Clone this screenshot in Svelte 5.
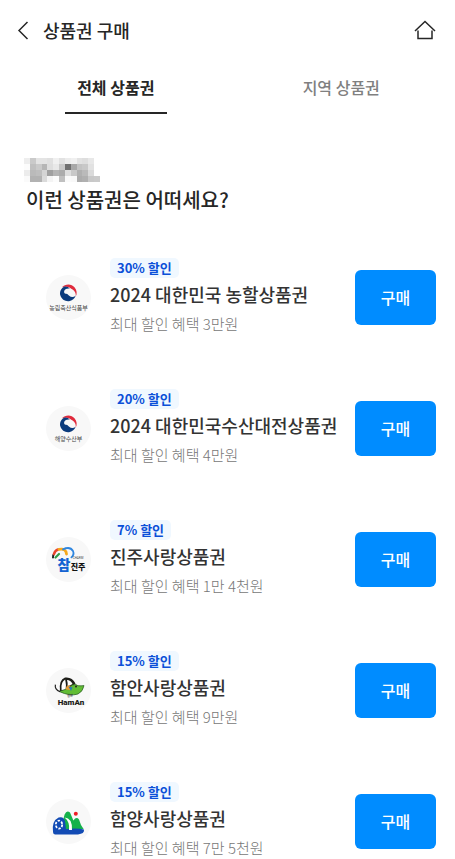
<script lang="ts">
  type Voucher = {
    logo: string;
    rate: number;
    name: string;
    benefit: string;
  };

  const tabs = ["전체 상품권", "지역 상품권"];
  let active = $state(0);

  const vouchers: Voucher[] = [
    { logo: "mafra", rate: 30, name: "2024 대한민국 농할상품권", benefit: "3만원" },
    { logo: "mof", rate: 20, name: "2024 대한민국수산대전상품권", benefit: "4만원" },
    { logo: "jinju", rate: 7, name: "진주사랑상품권", benefit: "1만 4천원" },
    { logo: "haman", rate: 15, name: "함안사랑상품권", benefit: "9만원" },
    { logo: "hamyang", rate: 15, name: "함양사랑상품권", benefit: "7만 5천원" },
  ];

  // grey levels of the masked user name, one row per line of blocks
  const mask = [
    [238, 202, 228, 228, 224, 240, 226, 236, 240, 226, 222, 232, 255],
    [252, 192, 202, 182, 222, 232, 200, 112, 168, 195, 200, 226, 255],
    [236, 186, 190, 212, 160, 180, 172, 222, 200, 176, 186, 218, 255],
    [250, 178, 178, 218, 244, 252, 192, 250, 248, 172, 176, 200, 202],
  ];
</script>

{#snippet taegeuk()}
  <path
    d="M16 12.2C19.5 8.5 25.5 8.6 28.7 12.4C31 15.2 31.2 18.8 29.8 21.6C30 18 28.8 16 26.6 14.6C24.2 13 22.8 10.8 16 12.2Z"
    fill="#e02b3c"
  />
  <path
    d="M17.6 11.9C14.6 13.8 13.4 17.4 14.4 20.6C15.6 24.4 19.2 26.7 23 26.2C26.2 25.8 28.8 23.6 29.6 20.8C27.6 22.4 25 22.4 23.2 20.8C21.6 19.4 21.4 18.6 19.8 18.8C18.4 18.8 17.6 17.2 18.4 15.6C19.2 13.8 21.6 13 23.8 13.6C22.4 11.8 19.6 11 17.6 11.9Z"
    fill="#0b3b7c"
  />
{/snippet}

{#snippet logo(name: string)}
  <svg class="logo" viewBox="0 0 45 45" aria-hidden="true">
    <circle cx="22.5" cy="22.5" r="22.5" fill="#f8f8f8" />
    {#if name === "mafra"}
      {@render taegeuk()}
      <text x="22.5" y="35" font-size="6" fill="#444">농림축산식품부</text>
    {:else if name === "mof"}
      {@render taegeuk()}
      <text x="22.5" y="35" font-size="6" fill="#444">해양수산부</text>
    {:else if name === "jinju"}
      <g fill="none" stroke-linecap="round">
        <path d="M7 20.5Q6.6 18.5 8 17" stroke="#222" stroke-width="2" />
        <path d="M8 17Q9 13.5 12 12.6" stroke="#e8452c" stroke-width="2.6" />
        <path d="M9.5 20.5L13 17" stroke="#2e9e48" stroke-width="2.2" />
        <path d="M13 12.4Q20 11 20.5 17" stroke="#f6a81c" stroke-width="2.8" />
        <path d="M17 12.4Q24 9 27 14Q28.6 17.6 25.4 20.4" stroke="#2f86e0" stroke-width="1.8" />
      </g>
      <text x="18" y="33" font-size="14" font-weight="900" fill="#1463d2">참</text>
      <text class="latin" x="32" y="22" font-size="3" fill="#444">CHARM</text>
      <text x="32" y="33" font-size="8" font-weight="900" fill="#111">진주</text>
    {:else if name === "haman"}
      <path d="M14 23Q12.6 12 19 9.6Q26 8.6 29.5 15.5L22 24Z" fill="#1d1d18" />
      <path d="M15.6 22Q14.4 14 19.2 11.4Q20.4 16 19.6 22.4Z" fill="#fff" />
      <path d="M21 12Q24.6 12 26.6 16L21.6 18.4Q22 15 21 12Z" fill="#fff" />
      <path d="M13 23.4Q18 22 23 20Q26 15.6 30 16.6Q31.4 18.4 38 17.6Q37 23.6 32 26Q24 28.6 13 23.4Z" fill="#62bd35" stroke="#245520" stroke-width="0.7" />
      <path d="M19.6 21.6Q20 16.6 24.4 17.4L24 22Z" fill="#e69a34" />
      <path d="M22.4 18.4L26.6 19.4L25 23Z" fill="#2879b5" />
      <circle cx="30" cy="18.4" r="1" fill="#222" />
      <path d="M9.4 16.6Q8.4 21.6 14 23.6" fill="none" stroke="#222" stroke-width="1.2" />
      <text x="24" y="29" font-size="3" font-weight="700" fill="#333">함안</text>
      <text class="latin" x="25" y="37" font-size="8" font-weight="900" fill="#1d1d18">HamAn</text>
    {:else}
      <path d="M15 29L18.6 15.6Q20.8 10.4 24 13.6L27.4 21.4Q30.4 17.4 33 20.4L35 26L37.6 30H16Z" fill="#15b24b" />
      <circle cx="29.8" cy="14.8" r="2" fill="#ef1d25" />
      <path d="M7 33Q5.6 22 12.6 18.6Q17.6 17 19 22L20 30Q32 28.6 38 30.6Q38.6 35 32 35.4H9Q7 35.4 7 33Z" fill="#124bb4" />
      <path d="M18.6 18.6Q26.4 19 26 31L23 31Q24 23 18.6 18.6Z" fill="#fff" />
      <ellipse cx="13" cy="25.6" rx="3.2" ry="4" fill="none" stroke="#fff" stroke-width="1.8" stroke-dasharray="2.4 1.4" />
    {/if}
  </svg>
{/snippet}

<header class="top">
  <button type="button" class="icon" aria-label="뒤로">
    <svg width="12" height="20" viewBox="0 0 12 20">
      <path d="M10.5 2L2 10.5L10.5 19" />
    </svg>
  </button>
  <h1>상품권 구매</h1>
  <button type="button" class="icon home" aria-label="홈">
    <svg width="22" height="20" viewBox="0 0 22 20">
      <path d="M1 11L11 1.5L21 11M4 10.5V18.5H18V10.5" />
    </svg>
  </button>
</header>

<nav class="tabs">
  {#each tabs as tab, i}
    <button type="button" class="tab" class:active={active === i} onclick={() => (active = i)}>
      {tab}
    </button>
  {/each}
</nav>

<main>
  <section class="intro">
    <svg class="mask" width="76" height="24" viewBox="0 0 13 4" preserveAspectRatio="none" shape-rendering="crispEdges" aria-hidden="true">
      {#each mask as row, y}
        {#each row as g, x}
          <rect {x} {y} width="1" height="1" fill="rgb({g},{g},{g})" />
        {/each}
      {/each}
    </svg>
    <h2>이런 상품권은 어떠세요?</h2>
  </section>

  <ul class="list">
    {#each vouchers as v}
      <li class="item">
        {@render logo(v.logo)}
        <div class="info">
          <span class="badge">{v.rate}% 할인</span>
          <h3>{v.name}</h3>
          <p>최대 할인 혜택 {v.benefit}</p>
        </div>
        <button type="button" class="buy">구매</button>
      </li>
    {/each}
  </ul>
</main>

<style>
  :global(body) {
    background: #fff;
    color: #262626;
    font-family: "Noto Sans CJK KR", "Noto Sans", sans-serif;
  }
  h1,
  h2,
  h3,
  p,
  ul {
    margin: 0;
    padding: 0;
  }
  button {
    border: 0;
    padding: 0;
    background: none;
    font-family: inherit;
    color: inherit;
    cursor: pointer;
  }
  .top {
    display: flex;
    align-items: center;
    height: 60px;
    padding: 0 19px 0 17px;
  }
  .icon {
    display: flex;
  }
  .icon path {
    fill: none;
    stroke: #262626;
    stroke-width: 1.5;
  }
  .home {
    margin-left: auto;
  }
  h1 {
    margin-left: 14px;
    font-size: 18px;
    font-weight: 500;
    line-height: 28px;
  }
  .tabs {
    display: flex;
    padding: 0 1px 0 3px;
  }
  .tab {
    flex: 1;
    display: flex;
    flex-direction: column;
    align-items: center;
    font-size: 16px;
    font-weight: 500;
    line-height: 24px;
    padding-top: 15px;
    color: #808080;
  }
  .tab::after {
    content: "";
    width: 102px;
    height: 2px;
    margin-top: 13px;
  }
  .tab.active {
    color: #262626;
    font-weight: 700;
  }
  .tab.active::after {
    background: #262626;
  }
  .intro {
    padding: 44px 24px 0;
  }
  .mask {
    display: block;
  }
  h2 {
    margin: 3px 0 0 2px;
    font-size: 20px;
    font-weight: 500;
    line-height: 30px;
  }
  .list {
    display: flex;
    flex-direction: column;
    gap: 53px;
    padding: 43px 19px 0 46px;
    list-style: none;
  }
  .item {
    display: flex;
    align-items: center;
  }
  .logo {
    flex: none;
    width: 45px;
    height: 45px;
  }
  .logo text {
    text-anchor: middle;
  }
  .logo .latin {
    font-family: Roboto, sans-serif;
  }
  .info {
    flex: 1;
    min-width: 0;
    margin-left: 19px;
    white-space: nowrap;
  }
  .badge {
    display: block;
    width: fit-content;
    padding: 0 7px;
    border-radius: 5px;
    background: #f0f8ff;
    color: #0b50d8;
    font-size: 13px;
    font-weight: 700;
    line-height: 20px;
  }
  h3 {
    margin-top: 2px;
    color: #333;
    font-size: 18px;
    font-weight: 500;
    line-height: 28px;
  }
  p {
    margin-top: 4px;
    color: #777;
    font-size: 15px;
    font-weight: 300;
    line-height: 24px;
  }
  .buy {
    flex: none;
    width: 81px;
    height: 55px;
    border-radius: 6px;
    background: #008cff;
    color: #fff;
    font-size: 16px;
    font-weight: 500;
    line-height: 24px;
  }
</style>
